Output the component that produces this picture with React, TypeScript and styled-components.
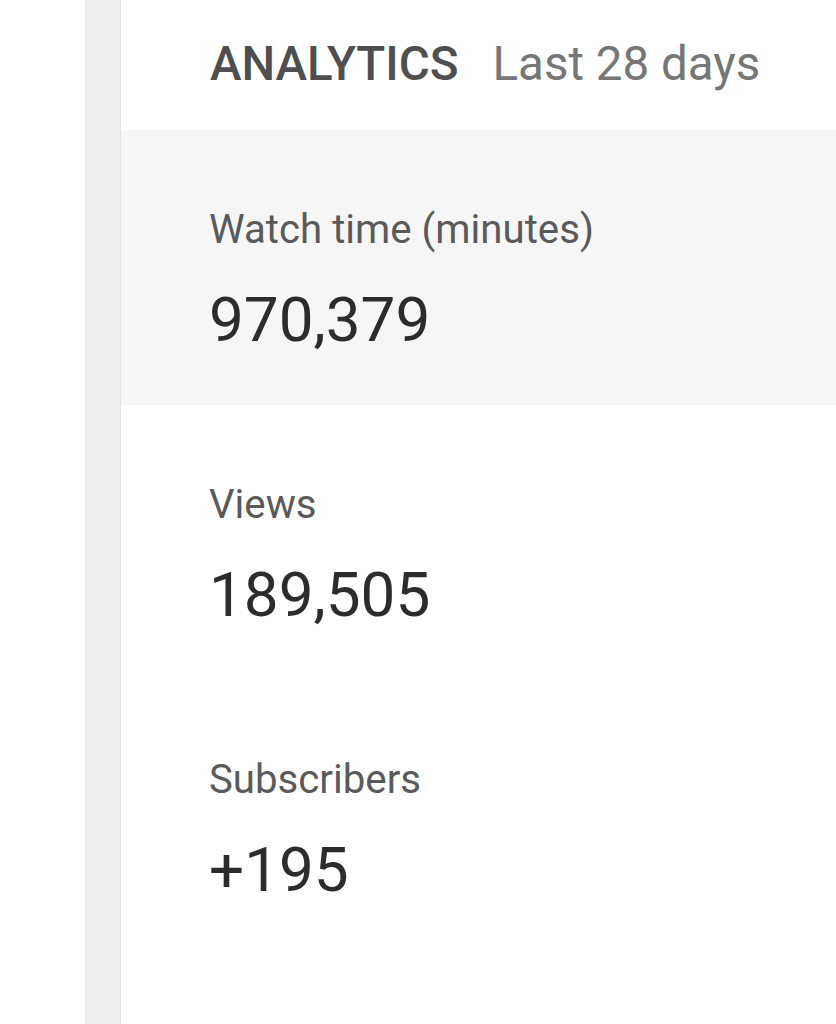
import styled, { createGlobalStyle } from "styled-components";

const GlobalStyle = createGlobalStyle`
  html, body {
    margin: 0;
    padding: 0;
    background: #ffffff;
  }
  body {
    font-family: Roboto, "Noto Sans", "Liberation Sans", sans-serif;
  }
`;

type Stat = {
  label: string;
  value: string;
  highlighted?: boolean;
};

const stats: Stat[] = [
  { label: "Watch time (minutes)", value: "970,379", highlighted: true },
  { label: "Views", value: "189,505" },
  { label: "Subscribers", value: "+195" },
];

const App = () => {
  return (
    <>
      <GlobalStyle />
      <Page>
        <Gutter />
        <Rail />
        <Main>
          <Header>
            <Title>ANALYTICS</Title>
            <Period>Last 28 days</Period>
          </Header>
          {stats.map((s) => (
            <StatRow key={s.label} $highlighted={s.highlighted}>
              <Label>{s.label}</Label>
              <Value>{s.value}</Value>
            </StatRow>
          ))}
        </Main>
      </Page>
    </>
  );
};

export default App;

const Page = styled.div`
  display: flex;
  min-height: 1024px;
  width: 836px;
  overflow: hidden;
`;

const Gutter = styled.div`
  width: 85px;
  flex-shrink: 0;
  background: #ffffff;
`;

const Rail = styled.div`
  width: 36px;
  flex-shrink: 0;
  box-sizing: border-box;
  background: #eeeeee;
  border-left: 1px solid #e8e8e8;
  border-right: 1px solid #e3e3e3;
`;

const Main = styled.main`
  flex: 1;
  display: flex;
  flex-direction: column;
  background: #ffffff;
`;

const Header = styled.header`
  height: 130px;
  box-sizing: border-box;
  padding: 36px 0 0 89px;
  display: flex;
  align-items: baseline;
  gap: 34px;
  white-space: nowrap;
`;

const Title = styled.span`
  font-size: 47.5px;
  line-height: 56px;
  font-weight: 500;
  color: #4f4f4f;
`;

const Period = styled.span`
  font-size: 47.5px;
  line-height: 56px;
  font-weight: 400;
  color: #767676;
`;

const StatRow = styled.section<{ $highlighted?: boolean }>`
  height: 275px;
  box-sizing: border-box;
  padding: 76px 0 0 88px;
  display: flex;
  flex-direction: column;
  gap: 30px;
  background: ${(p) => (p.$highlighted ? "#f6f6f6" : "#ffffff")};
`;

const Label = styled.div`
  font-size: 40.2px;
  line-height: 48px;
  color: #5a5a5a;
`;

const Value = styled.div`
  font-size: 62px;
  line-height: 72px;
  color: #2c2c2c;
`;
